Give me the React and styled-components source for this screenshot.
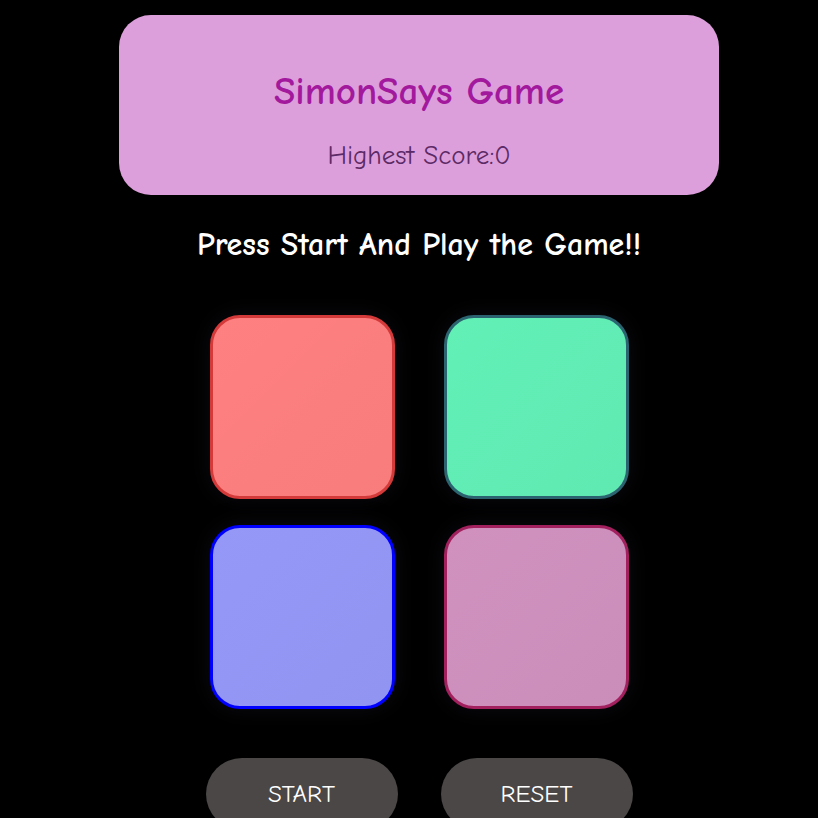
import styled, { createGlobalStyle } from 'styled-components';

const GlobalStyle = createGlobalStyle`
  html, body {
    margin: 0;
    padding: 0;
    background: #000;
    overflow: hidden;
  }
  body {
    font-family: "Comic Sans MS", "Comic Neue", "DejaVu Sans", sans-serif;
  }
`;

const boxes = [
  { id: 'red', fill: '#ff8080', edge: '#d43a3a' },
  { id: 'green', fill: '#62f0b7', edge: '#2b6470' },
  { id: 'blue', fill: '#9698f8', edge: '#0000ff' },
  { id: 'pink', fill: '#d091bf', edge: '#a2205e' },
];

const App = () => {
  return (
    <Page>
      <GlobalStyle />
      <Header>
        <Title>SimonSays Game</Title>
        <Score>Highest Score:0</Score>
      </Header>
      <Prompt>Press Start And Play the Game!!</Prompt>
      <Board>
        {boxes.map((b) => (
          <Pad key={b.id} fill={b.fill} edge={b.edge} />
        ))}
      </Board>
      <Controls>
        <Button>START</Button>
        <Button>RESET</Button>
      </Controls>
    </Page>
  );
};

export default App;

const Page = styled.div`
  display: flex;
  flex-direction: column;
  align-items: center;
  padding: 15px 0 0 20px;
  color: #fff;

  & > * {
    flex-shrink: 0;
  }
`;

const Header = styled.div`
  width: 600px;
  height: 180px;
  background: #dd9fdb;
  border-radius: 32px;
  display: flex;
  flex-direction: column;
  align-items: center;
  padding-top: 55px;
  box-sizing: border-box;
`;

const Title = styled.h1`
  margin: 0;
  font-size: 39px;
  line-height: 44px;
  font-weight: bold;
  color: #a3199d;
`;

const Score = styled.p`
  margin: 26px 0 0;
  font-size: 27px;
  line-height: 32px;
  color: #5c2a66;
`;

const Prompt = styled.h2`
  margin: 30px 0 0;
  font-size: 32px;
  line-height: 40px;
  font-weight: bold;
  color: #fff;
`;

const Board = styled.div`
  display: grid;
  grid-template-columns: 185px 185px;
  column-gap: 49px;
  row-gap: 26px;
  margin-top: 50px;
`;

const Pad = styled.div`
  width: 185px;
  height: 184px;
  box-sizing: border-box;
  border: 3px solid ${(p) => p.edge};
  border-radius: 30px;
  background: linear-gradient(135deg, ${(p) => p.fill}, ${(p) => p.fill}f8);
  box-shadow: 0 0 24px rgba(40, 40, 60, 0.3);
`;

const Controls = styled.div`
  display: flex;
  gap: 43px;
  margin-top: 49px;
`;

const Button = styled.button`
  width: 192px;
  height: 72px;
  border: none;
  border-radius: 36px;
  background: #4b4747;
  color: #fff;
  font-family: "Comic Sans MS", "Comic Neue", "DejaVu Sans", sans-serif;
  font-size: 25px;
  padding-bottom: 2px;
`;
